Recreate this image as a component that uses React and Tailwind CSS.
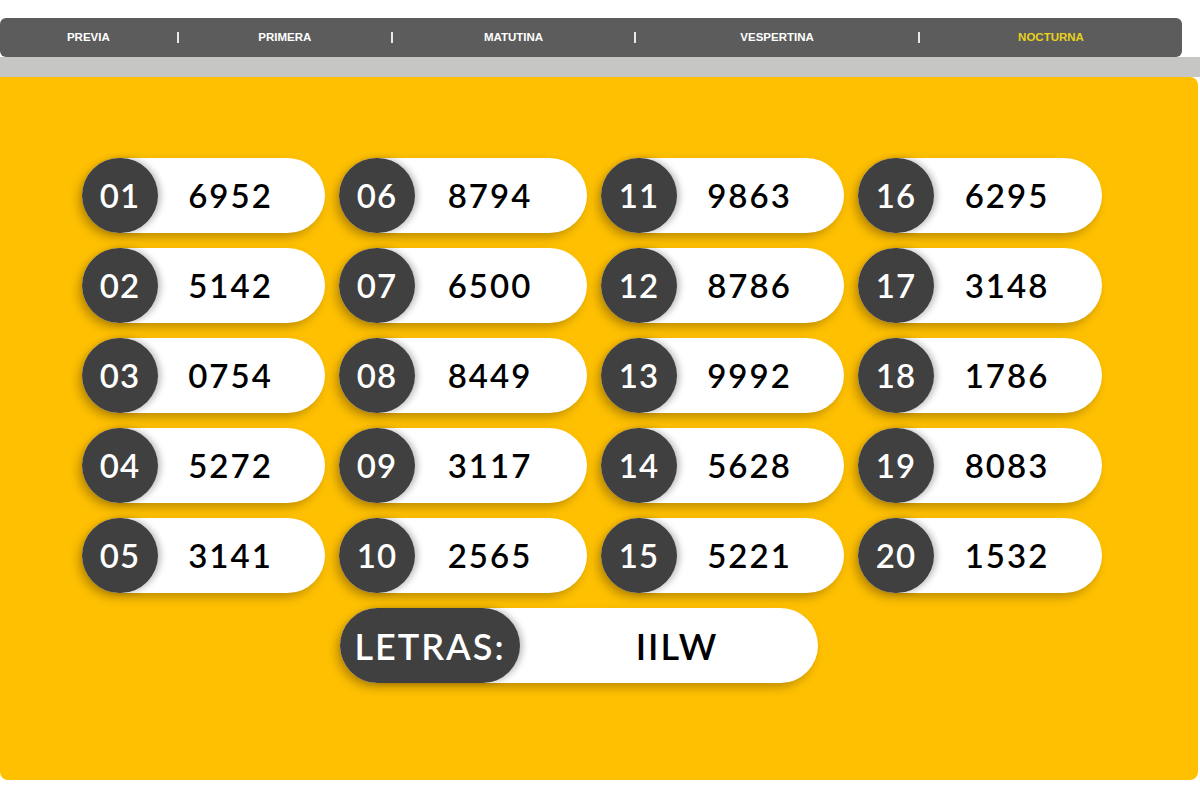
import React from 'react';

const tabs = [
  { label: 'PREVIA', active: false },
  { label: 'PRIMERA', active: false },
  { label: 'MATUTINA', active: false },
  { label: 'VESPERTINA', active: false },
  { label: 'NOCTURNA', active: true },
];

const results = [
  ['01', '6952'], ['06', '8794'], ['11', '9863'], ['16', '6295'],
  ['02', '5142'], ['07', '6500'], ['12', '8786'], ['17', '3148'],
  ['03', '0754'], ['08', '8449'], ['13', '9992'], ['18', '1786'],
  ['04', '5272'], ['09', '3117'], ['14', '5628'], ['19', '8083'],
  ['05', '3141'], ['10', '2565'], ['15', '5221'], ['20', '1532'],
];

function ResultCard({ pos, value }) {
  return (
    <div className="flex h-[75px] items-center rounded-full bg-white shadow-[-4px_5px_8px_rgba(90,60,0,0.35)]">
      <div className="flex h-full w-[76px] shrink-0 items-center justify-center rounded-full bg-[#404040] text-[33px] font-semibold tracking-[1px] text-white shadow-[3px_0_6px_rgba(0,0,0,0.25)]">
        {pos}
      </div>
      <div className="flex-1 pr-[22px] text-center text-[33px] font-semibold tracking-[2px] text-black">
        {value}
      </div>
    </div>
  );
}

export default function App() {
  return (
    <div className="h-[800px] w-[1200px] bg-white pt-[18px] font-['Lato',sans-serif]">
      <div className="flex h-[39px] w-[1182px] items-center rounded-[6px] bg-[#5c5c5c] font-['Liberation_Sans',sans-serif] text-[11.5px] font-bold text-white">
        {tabs.map((t, i) => (
          <React.Fragment key={t.label}>
            {i > 0 && <span className="h-[11px] w-[2px] bg-[#e8e8e8]" />}
            <span
              className={
                'text-center ' +
                (i === 0 ? 'w-[178px] ' : i === 1 ? 'w-[214px] ' : i === 2 ? 'w-[243px] ' : i === 3 ? 'w-[284px] ' : 'w-[264px] ') +
                (t.active ? 'text-[#e8d21c]' : '')
              }
            >
              {t.label}
            </span>
          </React.Fragment>
        ))}
      </div>
      <div className="h-[20px] w-full bg-[#c6c6c4]" />
      <div className="h-[703px] w-[1198px] rounded-b-[8px] rounded-tr-[8px] bg-[#fec000] pt-[81px]">
        <div className="ml-[82px] grid grid-cols-[243px_248px_243px_244px] gap-x-[14px] gap-y-[15px]">
          {results.map(([pos, value]) => (
            <ResultCard key={pos} pos={pos} value={value} />
          ))}
        </div>
        <div className="ml-[340px] mt-[15px] flex h-[75px] w-[478px] items-center rounded-full bg-white shadow-[-4px_5px_8px_rgba(90,60,0,0.35)]">
          <div className="flex h-full w-[180px] shrink-0 items-center justify-center rounded-full bg-[#404040] text-[36px] font-semibold tracking-[2px] text-white shadow-[3px_0_6px_rgba(0,0,0,0.25)]">
            LETRAS:
          </div>
          <div className="flex-1 pl-[16px] text-center text-[36px] font-semibold tracking-[2px] text-black">IILW</div>
        </div>
      </div>
    </div>
  );
}
